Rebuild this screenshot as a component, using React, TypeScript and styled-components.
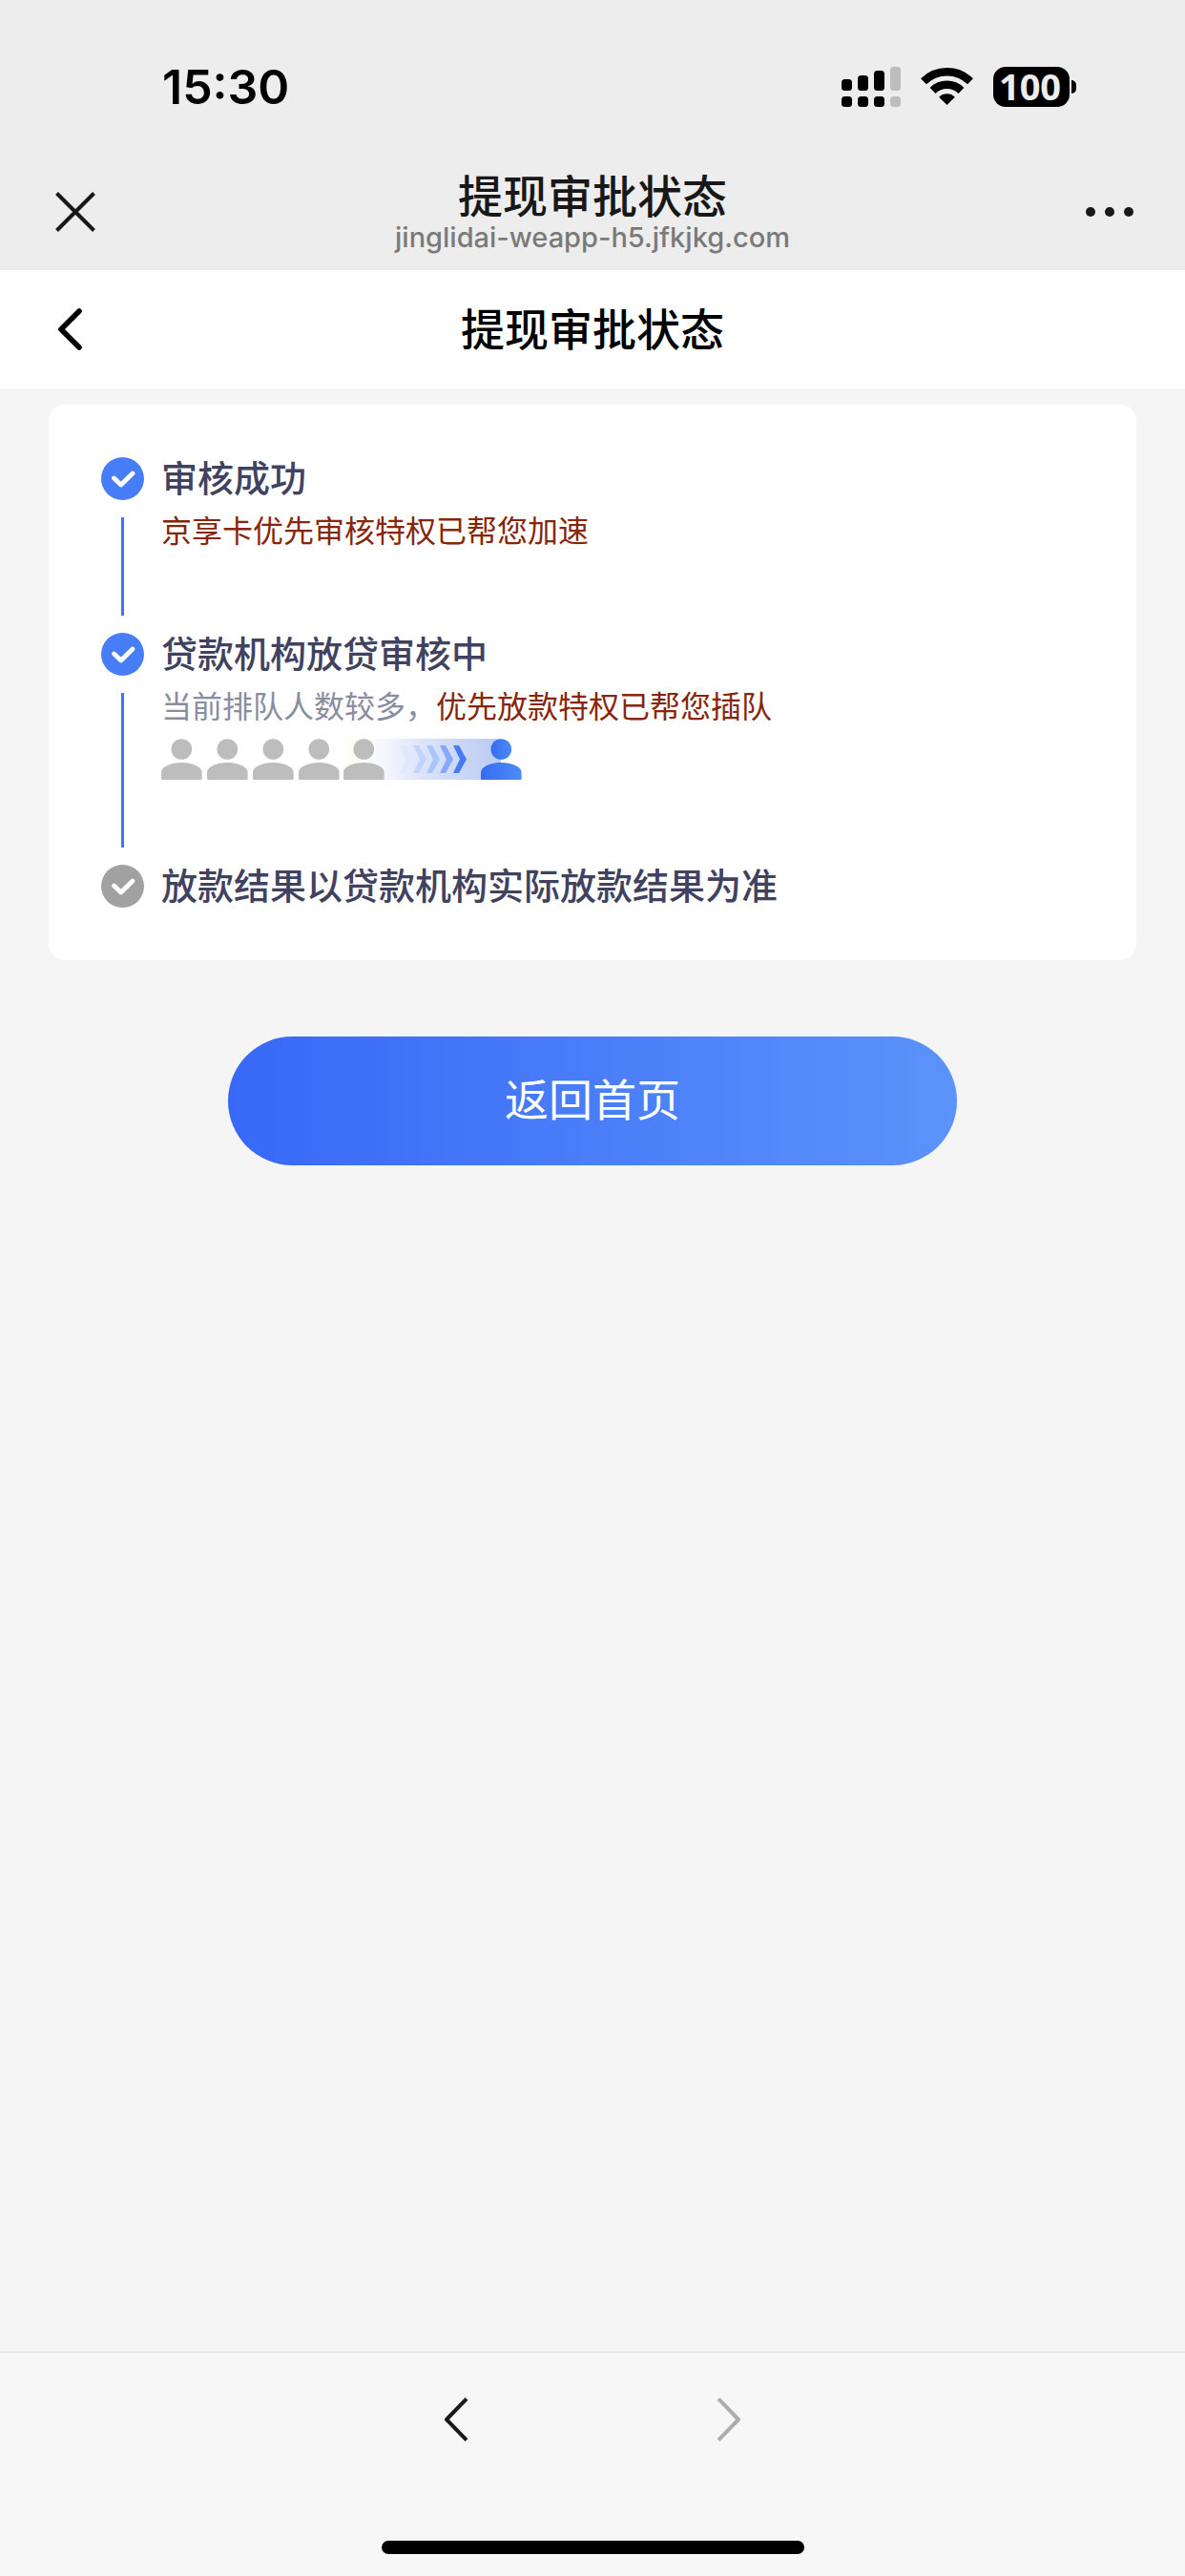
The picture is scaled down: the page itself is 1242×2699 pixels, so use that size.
import React from 'react';
import styled, { createGlobalStyle } from 'styled-components';

const GlobalStyle = createGlobalStyle`
  *, *::before, *::after { box-sizing: border-box; }
  body { margin: 0; background: #f5f5f5; }
  body, button {
    font-family: Inter, "Noto Sans CJK SC", sans-serif;
  }
  h1, h2, p, ol { margin: 0; padding: 0; }
  svg { display: block; flex: none; }
`;

const Page = styled.div`
  min-height: 100vh;
  display: flex;
  flex-direction: column;
  background: #f5f5f5;
`;

const Chrome = styled.header`
  background: #ededed;
  color: #181818;
`;

const StatusBar = styled.div`
  height: 160px;
  padding: 22px 114px 0 170px;
  display: flex;
  align-items: center;
  justify-content: space-between;
  color: #000;
`;

const Clock = styled.time`
  font-size: 50px;
  line-height: 60px;
  font-weight: 600;
`;

const StatusIcons = styled.div`
  display: flex;
  align-items: center;
  gap: 21px;
`;

const Battery = styled.div`
  display: flex;
  align-items: center;
  gap: 2px;
`;

const BatteryBody = styled.span`
  width: 80px;
  height: 42px;
  padding-right: 3px;
  border-radius: 13px;
  background: #000;
  color: #ededed;
  font-family: "Open Sans", sans-serif;
  font-size: 38px;
  font-weight: 700;
  line-height: 40px;
  text-align: center;
`;

const BatteryTip = styled.span`
  width: 5px;
  height: 14px;
  border-radius: 0 5px 5px 0;
  background: #000;
`;

const Bar = styled.div<{ $height: number }>`
  height: ${(p) => p.$height}px;
  display: grid;
  grid-template-columns: 150px 1fr 150px;
  align-items: center;
`;

const IconButton = styled.button<{ $align?: 'start' | 'end' }>`
  height: 100%;
  padding: 0 54px 0 58px;
  border: 0;
  background: none;
  color: inherit;
  display: flex;
  align-items: center;
  justify-content: ${(p) => p.$align ?? 'center'};
`;

const BrowserTitle = styled.div`
  display: flex;
  flex-direction: column;
  align-items: center;
`;

const PageName = styled.p`
  font-size: 47px;
  line-height: 54px;
  font-weight: 500;
`;

const Address = styled.p`
  font-size: 29px;
  line-height: 32px;
  font-weight: 500;
  color: #7a7a7a;
`;

const AppNav = styled.nav`
  background: #fff;
  color: #000;
`;

const NavTitle = styled.h1`
  font-size: 46px;
  line-height: 56px;
  font-weight: 500;
  text-align: center;
`;

const Main = styled.main`
  flex: 1;
  padding: 17px 51px;
  display: flex;
  flex-direction: column;
  align-items: center;
  gap: 80px;
`;

const Card = styled.ol`
  width: 100%;
  padding: 55px;
  border-radius: 17px;
  background: #fff;
  list-style: none;
`;

const Step = styled.li`
  display: flex;
  gap: 18px;
`;

const Rail = styled.div`
  display: flex;
  flex-direction: column;
  align-items: center;
  gap: 18px;
`;

const Connector = styled.span`
  flex: 1;
  width: 3px;
  margin-bottom: 18px;
  background: #3f75f6;
`;

const StepBody = styled.div<{ $last?: boolean }>`
  display: flex;
  flex-direction: column;
  gap: 11px;
  padding-bottom: ${(p) => (p.$last ? 0 : 84)}px;
`;

const StepTitle = styled.h2`
  font-size: 38px;
  line-height: 45px;
  font-weight: 500;
  color: #40425f;
`;

const StepNote = styled.p`
  font-size: 32px;
  line-height: 44px;
  color: #8a8d9e;
`;

const Highlight = styled.strong`
  font-weight: 400;
  color: #87260a;
`;

const QueueArt = styled.svg`
  margin-bottom: 5px;
`;

const HomeButton = styled.button`
  width: 67%;
  height: 135px;
  padding: 0 0 4px;
  border: 0;
  border-radius: 68px;
  background: linear-gradient(90deg, #3768f7, #5b93fa);
  color: #fff;
  font-size: 46px;
  line-height: 60px;
`;

const Toolbar = styled.footer`
  border-top: 1px solid #dedede;
  background: #f7f7f7;
  color: #181818;
  display: flex;
  flex-direction: column;
  align-items: center;
  padding-bottom: 23px;
`;

const History = styled.div`
  height: 140px;
  display: flex;
  align-items: center;
  gap: 160px;
`;

const HistoryButton = styled.button`
  width: 125px;
  height: 100px;
  padding: 0;
  border: 0;
  background: none;
  color: inherit;
  display: flex;
  align-items: center;
  justify-content: center;

  &:disabled { color: #adadad; }
`;

const HomeIndicator = styled.span`
  width: 443px;
  height: 14px;
  margin-top: 57px;
  border-radius: 7px;
  background: #000;
`;

const signalTops = [13, 9, 4, 0];

function SignalIcon() {
  return (
    <svg width="62" height="42" viewBox="0 0 62 42" aria-hidden="true">
      {signalTops.map((top, i) => (
        <g key={top} fill={i === 3 ? '#bdbdbd' : '#000'}>
          <rect x={i * 17} y={top} width="11" height={25 - top} rx="3.5" />
          <rect x={i * 17} y="31" width="11" height="11" rx="3.5" />
        </g>
      ))}
    </svg>
  );
}

function WifiIcon() {
  return (
    <svg width="55" height="42" viewBox="0 0 55 42" aria-hidden="true">
      <g fill="none" stroke="#000" strokeWidth="8.4">
        <path d="M3 15.3A35 35 0 0 1 52 15.3" />
        <path d="M12.6 24.9A21.3 21.3 0 0 1 42.4 24.9" />
      </g>
      <path d="M27.5 40L19.2 31.8A11.6 11.6 0 0 1 35.8 31.8Z" fill="#000" />
    </svg>
  );
}

function CloseIcon() {
  return (
    <svg width="42" height="42" viewBox="0 0 42 42" aria-hidden="true">
      <path d="M1.5 1.5L40.5 40.5M40.5 1.5L1.5 40.5" stroke="currentColor" strokeWidth="4" />
    </svg>
  );
}

function MoreIcon() {
  return (
    <svg width="50" height="10" viewBox="0 0 50 10" fill="currentColor" aria-hidden="true">
      <circle cx="5" cy="5" r="5" />
      <circle cx="25" cy="5" r="5" />
      <circle cx="45" cy="5" r="5" />
    </svg>
  );
}

function BackIcon() {
  return (
    <svg width="32" height="44" viewBox="0 0 32 44" aria-hidden="true">
      <path d="M25 3L6 22L25 41" fill="none" stroke="currentColor" strokeWidth="5.6" strokeLinecap="round" strokeLinejoin="round" />
    </svg>
  );
}

function ThinChevron({ forward }: { forward?: boolean }) {
  return (
    <svg width="25" height="48" viewBox="0 0 25 48" aria-hidden="true">
      <path
        d={forward ? 'M2 2.4L23 24L2 45.6' : 'M23 2.4L2 24L23 45.6'}
        fill="none"
        stroke="currentColor"
        strokeWidth="4"
        strokeLinejoin="round"
      />
    </svg>
  );
}

function CheckBadge({ done }: { done: boolean }) {
  return (
    <svg width="45" height="45" viewBox="0 0 45 45" role="img" aria-label={done ? '已完成' : '未完成'}>
      <circle cx="22.5" cy="22.5" r="22.5" fill={done ? '#477df7' : '#a1a1a1'} />
      <path d="M13.5 22L20.8 29L33 17" fill="none" stroke="#fff" strokeWidth="4.8" strokeLinecap="round" strokeLinejoin="round" />
    </svg>
  );
}

function Person({ x, fill }: { x: number; fill: string }) {
  return (
    <g transform={`translate(${x} 0)`} fill={fill}>
      <circle cx="21.3" cy="11" r="10.8" />
      <path d="M0 42V35C0 29.5 10 25 21.3 25S42.6 29.5 42.6 35V42Q42.6 43 41.6 43H1Q0 43 0 42Z" />
    </g>
  );
}

const arrows = [
  { x: 250, fill: '#e0e8fb' },
  { x: 264, fill: '#c3d3fb' },
  { x: 278, fill: '#abc4fc' },
  { x: 292, fill: '#86a9fb' },
  { x: 306, fill: '#467af8' },
];

function Queue() {
  return (
    <QueueArt width="378" height="43" viewBox="0 0 378 43" role="img" aria-label="排队">
      <defs>
        <linearGradient id="lane">
          <stop offset="0" stopColor="#fffff6" />
          <stop offset="0.26" stopColor="#f5f7fe" />
          <stop offset="0.5" stopColor="#dbe4fa" />
          <stop offset="1" stopColor="#b9caf1" />
        </linearGradient>
        <linearGradient id="front">
          <stop offset="0" stopColor="#356bf4" />
          <stop offset="1" stopColor="#4f8bf5" />
        </linearGradient>
      </defs>
      <rect x="191" width="165" height="43" fill="url(#lane)" />
      {[0, 48, 96, 144, 191].map((x) => (
        <Person key={x} x={x} fill="#bdbdbd" />
      ))}
      {arrows.map((a) => (
        <path key={a.x} d={`M${a.x} 7h6l8 14.5l-8 14.5h-6l7-14.5Z`} fill={a.fill} />
      ))}
      <Person x={335} fill="url(#front)" />
    </QueueArt>
  );
}

export default function App() {
  return (
    <>
      <GlobalStyle />
      <Page>
        <Chrome>
          <StatusBar>
            <Clock>15:30</Clock>
            <StatusIcons>
              <SignalIcon />
              <WifiIcon />
              <Battery>
                <BatteryBody>100</BatteryBody>
                <BatteryTip />
              </Battery>
            </StatusIcons>
          </StatusBar>
          <Bar $height={123}>
            <IconButton $align="start" aria-label="关闭"><CloseIcon /></IconButton>
            <BrowserTitle>
              <PageName>提现审批状态</PageName>
              <Address>jinglidai-weapp-h5.jfkjkg.com</Address>
            </BrowserTitle>
            <IconButton $align="end" aria-label="更多"><MoreIcon /></IconButton>
          </Bar>
        </Chrome>
        <AppNav>
          <Bar $height={124}>
            <IconButton $align="start" aria-label="返回"><BackIcon /></IconButton>
            <NavTitle>提现审批状态</NavTitle>
          </Bar>
        </AppNav>
        <Main>
          <Card>
            <Step>
              <Rail><CheckBadge done /><Connector /></Rail>
              <StepBody>
                <StepTitle>审核成功</StepTitle>
                <StepNote><Highlight>京享卡优先审核特权已帮您加速</Highlight></StepNote>
              </StepBody>
            </Step>
            <Step>
              <Rail><CheckBadge done /><Connector /></Rail>
              <StepBody>
                <StepTitle>贷款机构放贷审核中</StepTitle>
                <StepNote>当前排队人数较多，<Highlight>优先放款特权已帮您插队</Highlight></StepNote>
                <Queue />
              </StepBody>
            </Step>
            <Step>
              <Rail><CheckBadge done={false} /></Rail>
              <StepBody $last>
                <StepTitle>放款结果以贷款机构实际放款结果为准</StepTitle>
              </StepBody>
            </Step>
          </Card>
          <HomeButton>返回首页</HomeButton>
        </Main>
        <Toolbar>
          <History>
            <HistoryButton aria-label="后退"><ThinChevron /></HistoryButton>
            <HistoryButton aria-label="前进" disabled><ThinChevron forward /></HistoryButton>
          </History>
          <HomeIndicator />
        </Toolbar>
      </Page>
    </>
  );
}
